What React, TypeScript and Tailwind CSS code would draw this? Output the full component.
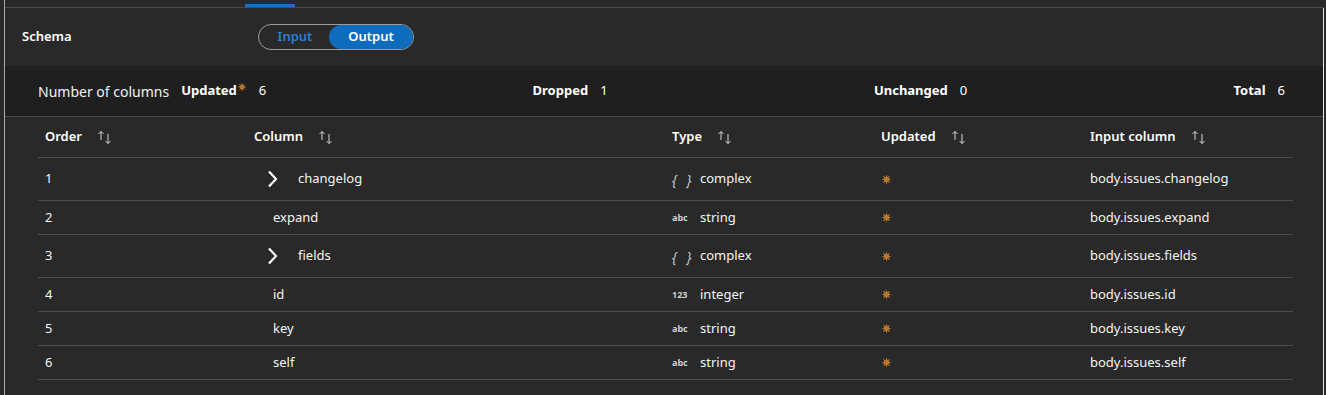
import React from "react";

type Row = {
  order: number;
  name: string;
  expandable: boolean;
  type: "complex" | "string" | "integer";
  input: string;
};

const rows: Row[] = [
  { order: 1, name: "changelog", expandable: true, type: "complex", input: "body.issues.changelog" },
  { order: 2, name: "expand", expandable: false, type: "string", input: "body.issues.expand" },
  { order: 3, name: "fields", expandable: true, type: "complex", input: "body.issues.fields" },
  { order: 4, name: "id", expandable: false, type: "integer", input: "body.issues.id" },
  { order: 5, name: "key", expandable: false, type: "string", input: "body.issues.key" },
  { order: 6, name: "self", expandable: false, type: "string", input: "body.issues.self" },
];

function SortIcon() {
  return (
    <svg width="16" height="15" viewBox="0 0 16 15" fill="none" stroke="#d6d6d6" strokeWidth="1">
      <path d="M4 1.5V10M1.5 4L4 1.5L6.5 4" />
      <path d="M11 4V13.5M8.5 11L11 13.5L13.5 11" />
    </svg>
  );
}

function Star({ size = 9 }: { size?: number }) {
  return (
    <svg width={size} height={size} viewBox="0 0 8 8" fill="#b8772c" stroke="#b8772c">
      <circle cx="4" cy="4" r="2.4" stroke="none" />
      <path d="M4 0.3V7.7M0.3 4H7.7M1.3 1.3L6.7 6.7M6.7 1.3L1.3 6.7" strokeWidth="1" />
    </svg>
  );
}

function Chevron() {
  return (
    <svg width="11" height="18" viewBox="0 0 11 18" fill="none" stroke="#ffffff" strokeWidth="2.2">
      <path d="M2 1.5L9 9L2 16.5" />
    </svg>
  );
}

function TypeIcon({ type }: { type: Row["type"] }) {
  if (type === "complex") {
    return <span className="text-[14px] italic text-[#c4c4c4] tracking-[3px]">{"{ }"}</span>;
  }
  return (
    <span className="text-[9px] font-bold text-[#d0d0d0]">{type === "integer" ? "123" : "abc"}</span>
  );
}

const header = ["Order", "Column", "Type", "Updated", "Input column"];

export default function App() {
  return (
    <div className="h-[395px] w-[1326px] bg-[#292929] pl-[4px] pr-[2px] font-['Noto_Sans',sans-serif] text-white overflow-hidden">
      <div className="h-full border-l border-[#a8a8a8] flex flex-col">
        {/* tab strip */}
        <div className="h-[8px] border-b border-[#4a4a4a] shrink-0">
          <div className="ml-[240px] mt-[4px] h-[3px] w-[50px] bg-[#1a6fc3]" />
        </div>

        <div className="flex-1 flex flex-col border-r border-r-[#e8e8e8]">
          {/* schema header */}
          <div className="h-[58px] flex items-center pl-[17px] shrink-0">
            <span className="w-[236px] text-[13px] font-semibold">Schema</span>
            <div className="flex items-center h-[26px] w-[156px] rounded-full border border-[#9c9c9c] text-[13px] font-semibold">
              <span className="flex-1 text-center text-[#2b7fd4] pl-[2px]">Input</span>
              <span className="h-[24px] w-[84px] rounded-full bg-[#0f6cbd] flex items-center justify-center">Output</span>
            </div>
          </div>

          {/* summary band */}
          <div className="h-[51px] bg-[#1f1f1f] border-b border-[#4a4a4a] flex items-center justify-between pl-[33px] pr-[38px] shrink-0">
            <div className="flex items-center">
              <span className="text-[14px] text-[#f2f2f2]">Number of columns</span>
              <span className="ml-[12px] text-[13px] font-bold">Updated</span>
              <span className="-mt-[9px] ml-[1px]">
                <Star size={8} />
              </span>
              <span className="ml-[13px] text-[13px]">6</span>
            </div>
            <div className="flex items-center text-[13px]">
              <span className="font-bold">Dropped</span>
              <span className="ml-[12px]">1</span>
            </div>
            <div className="flex items-center text-[13px]">
              <span className="font-bold">Unchanged</span>
              <span className="ml-[12px]">0</span>
            </div>
            <div className="flex items-center text-[13px]">
              <span className="font-bold">Total</span>
              <span className="ml-[12px]">6</span>
            </div>
          </div>

          {/* table */}
          <div className="ml-[33px] mr-[30px]">
            <div className="grid grid-cols-[209px_418px_209px_209px_209px] h-[41px] border-b border-[#4d4d4d] items-center">
              {header.map((h) => (
                <div key={h} className="flex items-center pl-[7px] text-[13px] font-semibold">
                  <span>{h}</span>
                  <span className="ml-[15px]">
                    <SortIcon />
                  </span>
                </div>
              ))}
            </div>
            {rows.map((r) => (
              <div
                key={r.order}
                className={
                  "grid grid-cols-[209px_418px_209px_209px_209px] border-b border-[#4d4d4d] items-center text-[13px] text-[#f4f4f4] " +
                  (r.expandable ? "h-[43px]" : "h-[34px]")
                }
              >
                <div className="pl-[7px]">{r.order}</div>
                <div className="pl-[7px] flex items-center">
                  {r.expandable ? (
                    <>
                      <span className="ml-[13px] flex">
                        <Chevron />
                      </span>
                      <span className="ml-[20px]">{r.name}</span>
                    </>
                  ) : (
                    <span className="ml-[19px]">{r.name}</span>
                  )}
                </div>
                <div className="pl-[7px] flex items-center">
                  <span className="w-[28px] flex items-center">
                    <TypeIcon type={r.type} />
                  </span>
                  <span>{r.type}</span>
                </div>
                <div className="pl-[8px] flex items-center">
                  <Star />
                </div>
                <div className="pl-[7px]">{r.input}</div>
              </div>
            ))}
          </div>
        </div>
      </div>
    </div>
  );
}
